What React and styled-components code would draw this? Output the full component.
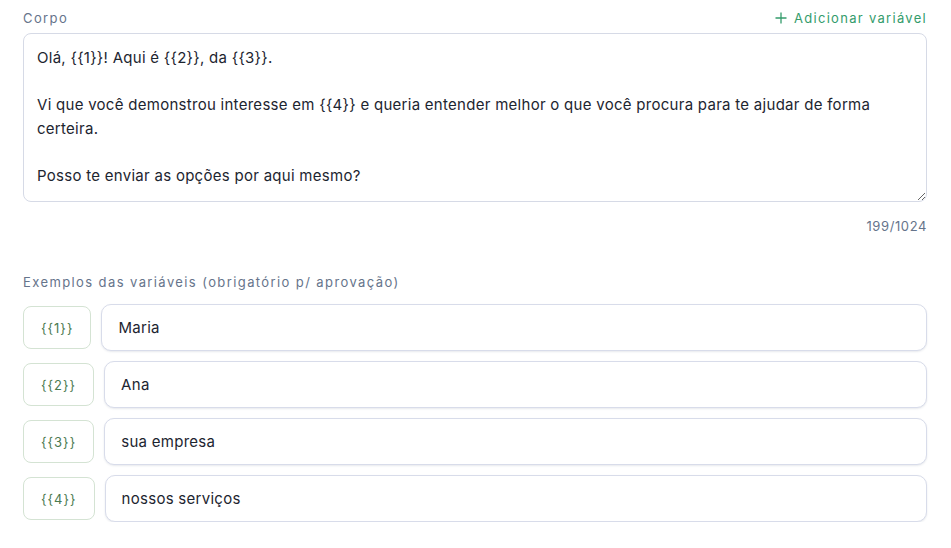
import React from "react";
import styled, { createGlobalStyle } from "styled-components";

const GlobalStyle = createGlobalStyle`
  body {
    margin: 0;
    background: #ffffff;
    font-family: Inter, "Noto Sans", sans-serif;
  }
`;

const Page = styled.div`
  padding: 10px 24px 0 23px;
  display: flex;
  flex-direction: column;
`;

const HeaderRow = styled.div`
  display: flex;
  justify-content: space-between;
  align-items: center;
  height: 16px;
  margin-bottom: 7px;
`;

const Label = styled.div`
  font-size: 13px;
  letter-spacing: 1.4px;
  color: #66748b;
`;

const AddButton = styled.button`
  border: none;
  background: none;
  padding: 0;
  font-family: inherit;
  font-size: 13px;
  letter-spacing: 1.3px;
  color: #349c6c;
  display: flex;
  align-items: center;
  gap: 7px;
  cursor: pointer;
`;

const Body = styled.textarea`
  box-sizing: border-box;
  width: 100%;
  height: 169px;
  padding: 12px 13px;
  border: 1px solid #d6dae6;
  border-radius: 8px;
  font-family: Inter, "Noto Sans", sans-serif;
  font-size: 15px;
  letter-spacing: 0.28px;
  line-height: 23.5px;
  color: #1d2530;
  resize: vertical;
  outline: none;
`;

const Counter = styled.div`
  text-align: right;
  font-size: 13px;
  letter-spacing: 0.6px;
  color: #66748b;
  margin-top: 16px;
`;

const SectionLabel = styled(Label)`
  margin-top: 40px;
  margin-bottom: 14px;
`;

const VarList = styled.div`
  display: flex;
  flex-direction: column;
  gap: 10px;
`;

const VarRow = styled.div`
  display: flex;
  align-items: center;
  gap: 10px;
`;

const Chip = styled.div`
  box-sizing: border-box;
  height: 43px;
  padding: 0 17px;
  display: flex;
  align-items: center;
  border: 1px solid #d4e3d3;
  border-radius: 8px;
  font-size: 13px;
  letter-spacing: 1px;
  color: #4b7a50;
  white-space: nowrap;
`;

const ValueInput = styled.input`
  box-sizing: border-box;
  flex: 1;
  height: 47px;
  padding: 0 16px;
  border: 1px solid #d8dcea;
  border-radius: 10px;
  box-shadow: 0 1px 2px rgba(60, 70, 110, 0.12);
  font-family: Inter, "Noto Sans", sans-serif;
  font-size: 15px;
  letter-spacing: 0.28px;
  color: #1d2530;
  outline: none;
`;

const bodyText =
  "Olá, {{1}}! Aqui é {{2}}, da {{3}}.\n\nVi que você demonstrou interesse em {{4}} e queria entender melhor o que você procura para te ajudar de forma certeira.\n\nPosso te enviar as opções por aqui mesmo?";

const vars = [
  { key: "{{1}}", value: "Maria" },
  { key: "{{2}}", value: "Ana" },
  { key: "{{3}}", value: "sua empresa" },
  { key: "{{4}}", value: "nossos serviços" },
];

export default function App() {
  return (
    <>
      <GlobalStyle />
      <Page>
        <HeaderRow>
          <Label>Corpo</Label>
          <AddButton>
            <svg width="12" height="12" viewBox="0 0 12 12">
              <path d="M6 0.5v11M0.5 6h11" stroke="#349c6c" strokeWidth="1.3" />
            </svg>
            Adicionar variável
          </AddButton>
        </HeaderRow>
        <Body defaultValue={bodyText} />
        <Counter>199/1024</Counter>
        <SectionLabel>Exemplos das variáveis (obrigatório p/ aprovação)</SectionLabel>
        <VarList>
          {vars.map((v) => (
            <VarRow key={v.key}>
              <Chip>{v.key}</Chip>
              <ValueInput defaultValue={v.value} />
            </VarRow>
          ))}
        </VarList>
      </Page>
    </>
  );
}
